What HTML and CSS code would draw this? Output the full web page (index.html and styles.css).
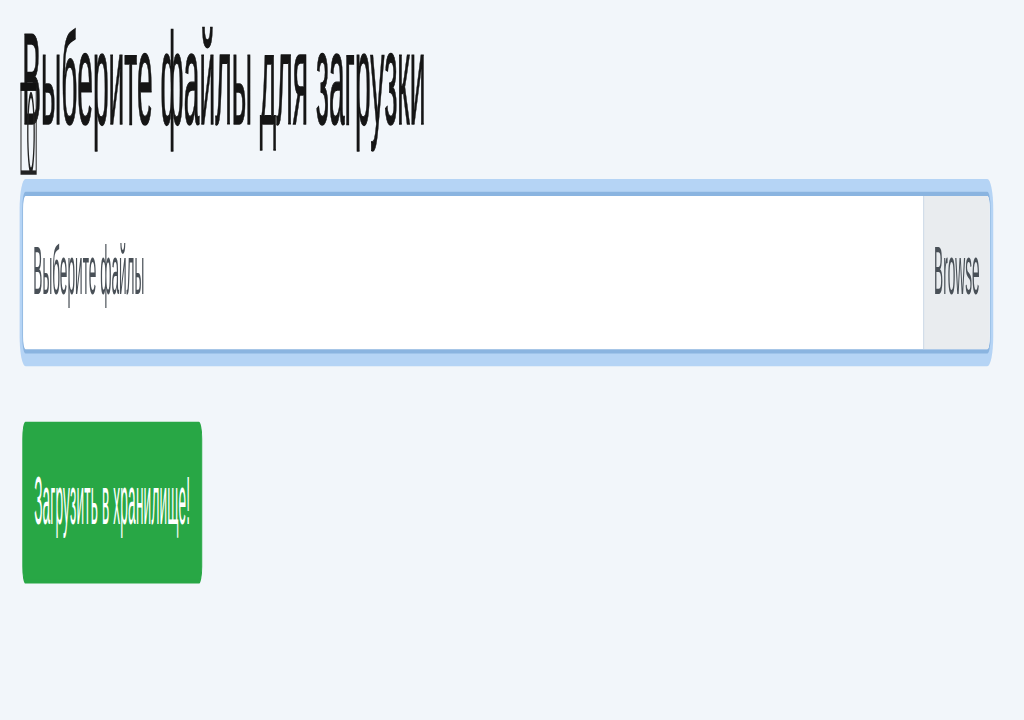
FILE: index.html
```html
<!DOCTYPE html>
<html lang="ru">
<head>
<meta charset="utf-8">
<title>Загрузка файлов</title>
<link rel="stylesheet" href="styles.css">
</head>
<body>
<div class="page">
  <div class="stage">
    <div class="title-row">
      <svg class="tofu" width="24" height="24" viewBox="0 0 24 24" aria-hidden="true">
        <rect x="2.5" y="1" width="19" height="22" fill="none" stroke="#222" stroke-width="1.2"/>
        <rect x="2" y="0.5" width="20" height="2" fill="#111"/>
        <ellipse cx="15" cy="13" rx="4" ry="9.5" fill="none" stroke="#222" stroke-width="1.6"/>
      </svg>
      <h3 class="title">Выберите файлы для загрузки</h3>
    </div>
    <div class="file-group">
      <span class="file-label">Выберите файлы</span>
      <span class="browse">Browse</span>
    </div>
    <button class="btn-upload" type="button">Загрузить в хранилище!</button>
  </div>
</div>
</body>
</html>
```

FILE: styles.css
```css
html, body {
  margin: 0;
  padding: 0;
  background: #f2f6fa;
  overflow: hidden;
}
.page {
  width: 1024px;
  height: 720px;
  background: #f2f6fa;
  overflow: hidden;
}
.stage {
  width: 1200px;
  height: 169px;
  box-sizing: border-box;
  padding: 0.7px 39px 0 26px;
  transform: scale(0.8533, 4.26);
  transform-origin: 0 0;
  font-family: "Liberation Sans", Arial, sans-serif;
  color: #212529;
}
.title-row {
  position: relative;
}
.title {
  margin: -1.1px 0 8.7px 0;
  font-size: 30.5px;
  font-weight: 400;
  line-height: 1.2;
  color: #151515;
  -webkit-text-stroke: 0.35px #151515;
  transform: scaleX(1.085);
  transform-origin: 0 0;
}
.tofu {
  position: absolute;
  left: -5px;
  top: 19.2px;
  width: 25px;
  height: 22.5px;
  z-index: 1;
}
.file-group {
  height: 38px;
  box-sizing: border-box;
  display: flex;
  align-items: stretch;
  border: 1px solid #8ab4e0;
  border-radius: 4px;
  background: #fff;
  box-shadow: 0 0 0 3px rgba(0, 110, 230, 0.25);
  overflow: hidden;
  font-size: 16px;
  color: #495057;
}
.file-label {
  flex: 1;
  display: flex;
  align-items: center;
  padding: 0 12px;
}
.browse {
  display: flex;
  align-items: center;
  padding: 0 12px;
  background: #e9ecef;
  border-left: 1px solid #c8d6e5;
}
.btn-upload {
  margin-top: 16px;
  height: 38px;
  padding: 6px 13px;
  border: 1px solid #28a745;
  border-radius: 4px;
  background: #28a745;
  color: #fff;
  font-family: "Liberation Sans", Arial, sans-serif;
  font-size: 16px;
  letter-spacing: 0.2px;
  line-height: 24px;
  cursor: pointer;
}
```
